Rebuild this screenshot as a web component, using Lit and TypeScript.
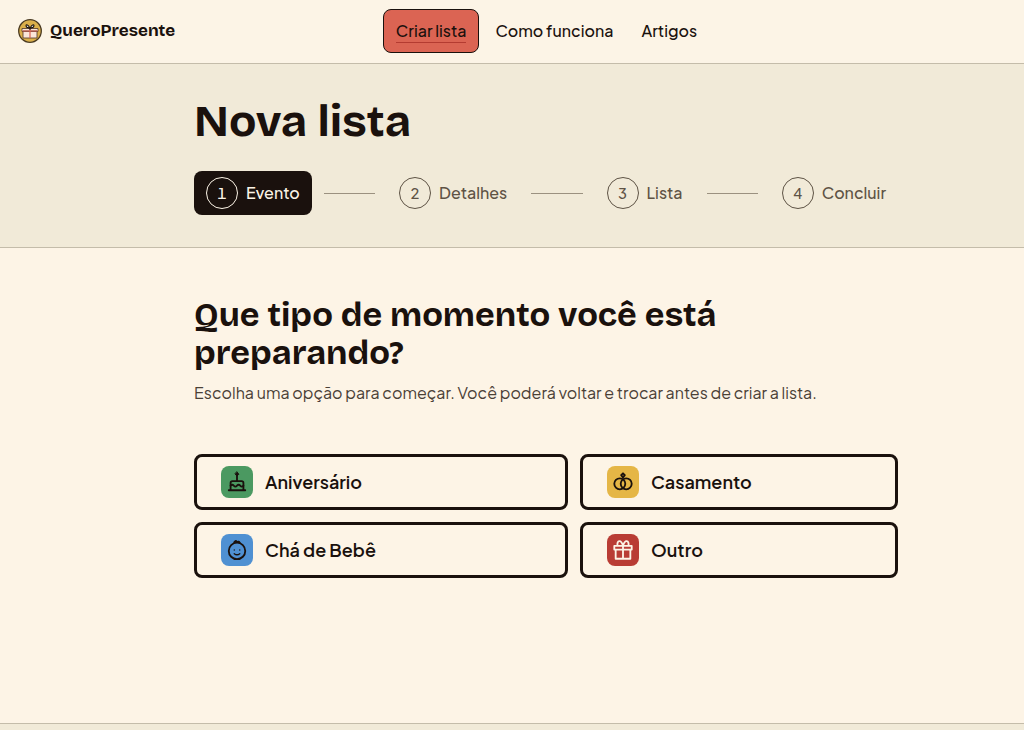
import { LitElement, html, css, svg } from "lit";
import { customElement, property } from "lit/decorators.js";
import { classMap } from "lit/directives/class-map.js";

const cake = svg`<path d="M3 21h18M5 21v-8a2 2 0 0 1 2-2h10a2 2 0 0 1 2 2v8M12 11V5"/><path d="M5 16q1.75-2 3.500 0t3.500 0t3.500 0t3.500 0"/><path d="m12 1 2 2.500-2 2-2-2z" fill="currentColor" stroke-width="1"/>`;
const rings = svg`<circle cx="8.500" cy="14" r="6"/><circle cx="15.500" cy="14" r="6"/><path d="m12 2.500 2 2-2 2.500-2-2.500z"/>`;
const baby = svg`<circle cx="12" cy="13" r="9"/><path d="M9 16q3 2.500 6 0M9 12h.01M15 12h.01" stroke-width="1.500"/><path d="M9 3.500q2-3 3 0 2-1.500 3 .8" fill="currentColor"/>`;
const gift = svg`<path d="M2.500 7.500h19v4h-19zM4 11.500h16V21.500H4zM12 7.500V21M12 7.500C10 0 5 1 6 7.500M12 7.500C14 0 19 1 18 7.500"/>`;

const events = [
  { label: "Aniversário", tone: "green", icon: cake },
  { label: "Casamento", tone: "yellow", icon: rings },
  { label: "Chá de Bebê", tone: "blue", icon: baby },
  { label: "Outro", tone: "red", icon: gift },
];
const steps = ["Evento", "Detalhes", "Lista", "Concluir"];

@customElement("step-list")
class StepList extends LitElement {
  @property({ type: Number }) current = 1;

  static styles = css`
    .steps { display: flex; align-items: center; gap: 12px; margin: 0; padding: 0; list-style: none; }
    .step { display: flex; align-items: center; gap: 8px; height: 44px; padding: 0 12px; border-radius: 8px; color: #5e5345; font-weight: 500; font-size: 16px; }
    .step.active { background: #1a110d; color: #fcf4e6; }
    .num { box-sizing: border-box; width: 32px; height: 32px; border: 1px solid currentColor; border-radius: 50%; display: grid; place-items: center; font-size: 15px; font-variant-numeric: tabular-nums; }
    .line { flex: 1; height: 1px; background: #9b9180; }
  `;
  render() {
    return html`<ol class="steps">
      ${steps.map((s, i) => html`
        ${i ? html`<li class="line" role="presentation"></li>` : ""}
        <li class=${classMap({ step: true, active: i + 1 === this.current })}>
          <span class="num">${i + 1}</span><span>${s}</span>
        </li>`)}
    </ol>`;
  }
}

@customElement("app-root")
class AppRoot extends LitElement {
  static styles = css`
    :host { display: flex; flex-direction: column; min-height: 100vh; background: #fdf4e6; color: #1a110d; font-family: "Plus Jakarta Sans", Inter, sans-serif; font-size: 16px; line-height: 24px; }
    .band { display: grid; grid-template-columns: 194fr minmax(0, 704px) 126fr; }
    .inner { grid-column: 2; }
    .top { height: 63px; align-items: center; border-bottom: 1px solid #c4bcaa; background: #fcf4e6; }
    .brand { display: flex; align-items: center; gap: 8px; padding-left: 18px; color: inherit; text-decoration: none; font-family: "Bricolage Grotesque", Inter, sans-serif; font-weight: 700; font-size: 17px; white-space: nowrap; margin-top: -1px; }
    .logo { width: 24px; height: 24px; }
    .nav { display: flex; justify-content: center; gap: 4px; margin-top: -1px; }
    .link { box-sizing: border-box; height: 44px; padding: 0 12px; display: flex; align-items: center; color: inherit; text-decoration: none; font-weight: 500; white-space: nowrap; }
    .link.active { border: 1px solid #1a110d; border-radius: 8px; background: #db6453; }
    .link.active .word { border-bottom: 1px solid #b43b31; line-height: 22px; }
    .hero { padding: 32px 0; border-bottom: 1px solid #c4bcaa; background: #f1ead8; }
    .title { margin: 0 0 24px; font-family: "Bricolage Grotesque", Inter, sans-serif; font-size: 45px; line-height: 51px; font-weight: 700; }
    .main { flex: 1; align-content: start; padding: 48px 0 64px; }
    .question { margin: 0 0 9px; font-family: "Bricolage Grotesque", Inter, sans-serif; font-size: 34px; line-height: 38px; font-weight: 700; }
    .hint { margin: 0 0 49px; color: #4a4036; }
    .cards { display: grid; grid-template-columns: 374fr 318fr; gap: 12px; }
    .card { display: flex; align-items: center; gap: 12px; height: 56px; padding: 0 24px; border: 3px solid #1a110d; border-radius: 8px; background: transparent; color: inherit; font: inherit; font-size: 18px; font-weight: 600; cursor: pointer; }
    .tile { width: 32px; height: 32px; border-radius: 8px; display: grid; place-items: center; }
    .icon { width: 22px; height: 22px; fill: none; stroke: currentColor; stroke-width: 2; stroke-linecap: round; stroke-linejoin: round; }
    .green { background: #4b9961; }
    .yellow { background: #e5b646; }
    .blue { background: #4f90d2; }
    .red { background: #b93c34; color: #fcf4e6; }
    .foot { border-top: 1px solid #c4bcaa; background: #f1ead8; padding: 3px 0; }
  `;
  render() {
    return html`
      <header class="band top">
        <a class="brand" href="#">
          <svg class="logo" viewBox="0 0 24 24" aria-hidden="true">
            <circle cx="12" cy="12" r="11.300" fill="#dcb04a" stroke="#4a3a22" stroke-width="1.300"/>
            <path d="M5 12h14v7H5zM4 9.500h16v3H4z" fill="#fbe6d8" stroke="#4a3328" stroke-width="0.800"/>
            <path d="M12 10v9M4.500 12h15" stroke="#db6453" stroke-width="1.200"/>
            <path d="M12 9.500C10 4.500 7 5 8.500 8zM12 9.500C14 4.500 17 5 15.500 8z" fill="#fff" stroke="#1a110d" stroke-width="1.200"/>
          </svg>
          <span>QueroPresente</span>
        </a>
        <nav class="nav inner">
          <a class="link active" href="#" aria-current="page"><span class="word">Criar lista</span></a>
          <a class="link" href="#">Como funciona</a>
          <a class="link" href="#">Artigos</a>
        </nav>
      </header>
      <section class="band hero">
        <div class="inner">
          <h1 class="title">Nova lista</h1>
          <step-list current="1"></step-list>
        </div>
      </section>
      <main class="band main">
        <div class="inner">
          <h2 class="question">Que tipo de momento você está preparando?</h2>
          <p class="hint">Escolha uma opção para começar. Você poderá voltar e trocar antes de criar a lista.</p>
          <div class="cards">
            ${events.map((e) => html`<button class="card" type="button">
              <span class="tile ${e.tone}"><svg class="icon" viewBox="0 0 24 24" aria-hidden="true">${e.icon}</svg></span>
              <span>${e.label}</span>
            </button>`)}
          </div>
        </div>
      </main>
      <footer class="foot"></footer>
    `;
  }
}
